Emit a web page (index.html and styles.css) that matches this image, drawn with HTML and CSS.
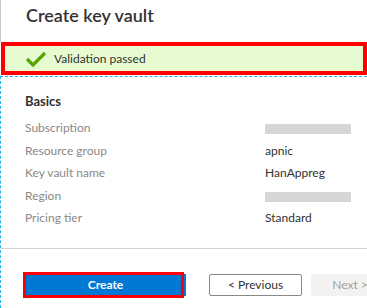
FILE: index.html
```html
<!DOCTYPE html>
<html lang="en">
<head>
  <meta charset="UTF-8" />
  <title>Create key vault</title>
  <link rel="stylesheet" href="styles.css">
</head>
<body>
  <!-- Blade header -->
  <div class="blade-header">
    <h1>Create key vault</h1>
  </div>

  <!-- Validation banner -->
  <div class="validation">
    <svg class="check" width="22" height="16" viewBox="0 0 22 16">
      <polyline points="2,8 8,14 20,2" fill="none" stroke="#57a300" stroke-width="3.2" />
    </svg>
    <span>Validation passed</span>
  </div>

  <!-- Summary -->
  <div class="summary">
    <h2>Basics</h2>
    <div class="row">
      <div class="label">Subscription</div>
      <div class="value"><span class="redacted"></span></div>
    </div>
    <div class="row">
      <div class="label">Resource group</div>
      <div class="value">apnic</div>
    </div>
    <div class="row">
      <div class="label">Key vault name</div>
      <div class="value">HanAppreg</div>
    </div>
    <div class="row">
      <div class="label">Region</div>
      <div class="value"><span class="redacted"></span></div>
    </div>
    <div class="row">
      <div class="label">Pricing tier</div>
      <div class="value">Standard</div>
    </div>

    <!-- Footer buttons -->
    <div class="footer">
      <div class="create-wrap">
        <button class="btn btn-primary">Create</button>
      </div>
      <button class="btn btn-default">&lt; Previous</button>
      <button class="btn btn-disabled">Next &gt;</button>
    </div>
  </div>
</body>
</html>
```

FILE: styles.css
```css
body, html {
  margin: 0;
  padding: 0;
  background-color: #ffffff;
  color: #323130;
  font-family: Lato, "Open Sans", Arial, sans-serif;
  overflow: hidden;
  height: 308px;
}

/* Header */
.blade-header {
  height: 42px;
  border-left: 1px solid #c8c8c8;
  box-sizing: border-box;
}

.blade-header h1 {
  margin: 0;
  padding: 4px 0 0 25px;
  font-size: 18px;
  line-height: 22px;
  font-weight: 600;
}

/* Validation banner (highlighted) */
.validation {
  display: flex;
  align-items: center;
  height: 25px;
  margin-left: 1px;
  border: 4px solid #ff0000;
  background-color: #e6fcd0;
  font-size: 12px;
  color: #323130;
}

.validation .check {
  margin-left: 20px;
  margin-right: 7px;
}

/* Summary section */
.summary {
  margin-top: 1px;
  border-top: 1px dashed #21b4ee;
  border-left: 1px dashed #21b4ee;
  padding-top: 15px;
  height: 216px;
}

.summary h2 {
  margin: 0 0 7px 24px;
  font-size: 13px;
  line-height: 18px;
  font-weight: 700;
  color: #323130;
}

.row {
  display: flex;
  height: 22.5px;
  line-height: 22.5px;
  font-size: 12px;
}

.label {
  width: 240px;
  flex-shrink: 0;
  padding-left: 24px;
  color: #8a8886;
}

.value {
  color: #323130;
}

.redacted {
  display: inline-block;
  width: 86px;
  height: 10px;
  margin-top: 7px;
  vertical-align: top;
  background-color: #d6d6d6;
}

/* Footer */
.footer {
  display: flex;
  margin-top: 18px;
  border-top: 1px solid #d2d2d2;
  padding: 25px 0 4px 24px;
  gap: 23px;
  overflow: hidden;
}

.btn {
  flex-shrink: 0;
  height: 22px;
  padding: 0;
  font-family: Lato, "Open Sans", Arial, sans-serif;
  font-size: 12px;
  border-radius: 2px;
  box-sizing: border-box;
}

.create-wrap {
  position: relative;
  flex-shrink: 0;
}

/* red highlight drawn over the button */
.create-wrap::after {
  content: "";
  position: absolute;
  left: -2px;
  top: -2px;
  width: 161px;
  height: 26px;
  border: 3px solid #ff0000;
  box-sizing: border-box;
}

.btn-primary {
  display: block;
  width: 161px;
  background-color: #0078d4;
  border: none;
  color: #ffffff;
  font-weight: 700;
  border-radius: 0;
}

.btn-default {
  width: 93px;
  background-color: #ffffff;
  border: 1px solid #8a8886;
  color: #323130;
}

.btn-disabled {
  width: 78px;
  margin-left: -14px;
  background-color: #f3f2f1;
  border: none;
  color: #a19f9d;
}
```
